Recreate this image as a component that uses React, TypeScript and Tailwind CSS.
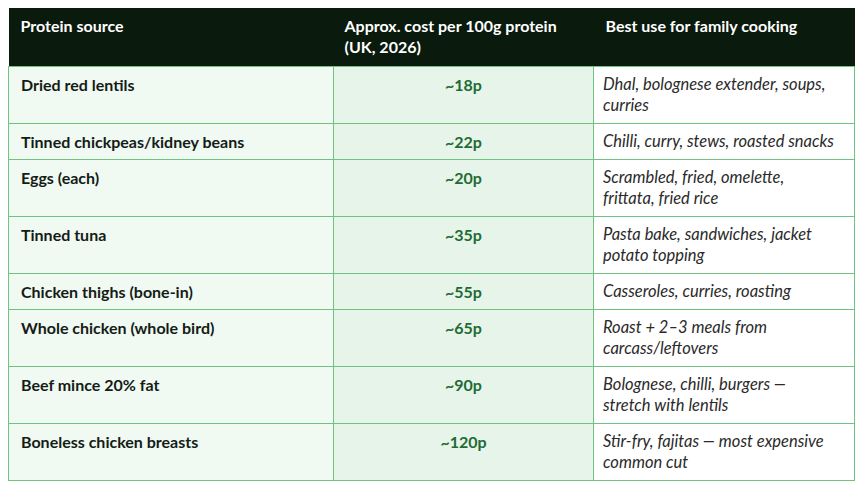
const rows = [
  { source: 'Dried red lentils', cost: '~18p', use: ['Dhal, bolognese extender, soups,', 'curries'] },
  { source: 'Tinned chickpeas/kidney beans', cost: '~22p', use: ['Chilli, curry, stews, roasted snacks'] },
  { source: 'Eggs (each)', cost: '~20p', use: ['Scrambled, fried, omelette,', 'frittata, fried rice'] },
  { source: 'Tinned tuna', cost: '~35p', use: ['Pasta bake, sandwiches, jacket', 'potato topping'] },
  { source: 'Chicken thighs (bone-in)', cost: '~55p', use: ['Casseroles, curries, roasting'] },
  { source: 'Whole chicken (whole bird)', cost: '~65p', use: ['Roast + 2–3 meals from', 'carcass/leftovers'] },
  { source: 'Beef mince 20% fat', cost: '~90p', use: ['Bolognese, chilli, burgers —', 'stretch with lentils'] },
  { source: 'Boneless chicken breasts', cost: '~120p', use: ['Stir-fry, fajitas — most expensive', 'common cut'] },
];

const App = () => {
  return (
    <div className="p-2 bg-white min-h-screen font-['Lato',sans-serif] text-[16px] leading-[21px]">
      <table className="border-collapse table-fixed w-[846px]">
        <colgroup>
          <col className="w-[325px]" />
          <col className="w-[260px]" />
          <col className="w-[261px]" />
        </colgroup>
        {/* Header */}
        <thead>
          <tr className="bg-[#0a1a0c] text-white align-top">
            <th className="h-[58px] px-3 py-[7px] text-left font-bold">Protein source</th>
            <th className="pl-[11px] pr-3 py-[7px] text-left font-bold">
              Approx. cost per 100g protein
              <br />
              (UK, 2026)
            </th>
            <th className="px-3 py-[7px] text-left font-bold">Best use for family cooking</th>
          </tr>
        </thead>
        <tbody>
          {rows.map((row) => (
            <tr key={row.source} className="align-top">
              <td className="border border-[#6fc27f] bg-[#f0f9f2] px-3 py-[7px] font-bold text-[#141c16]">
                {row.source}
              </td>
              <td className="border border-[#6fc27f] bg-[#e6f4e9] px-3 py-[7px] text-center font-bold text-[#1e6b35]">
                {row.cost}
              </td>
              <td className="border border-[#6fc27f] bg-white pl-[9px] pr-2 py-[7px] italic text-[16.5px] text-[#2a2a2a] whitespace-nowrap">
                {row.use.map((line) => (
                  <div key={line}>{line}</div>
                ))}
              </td>
            </tr>
          ))}
        </tbody>
      </table>
    </div>
  );
};

export default App;
